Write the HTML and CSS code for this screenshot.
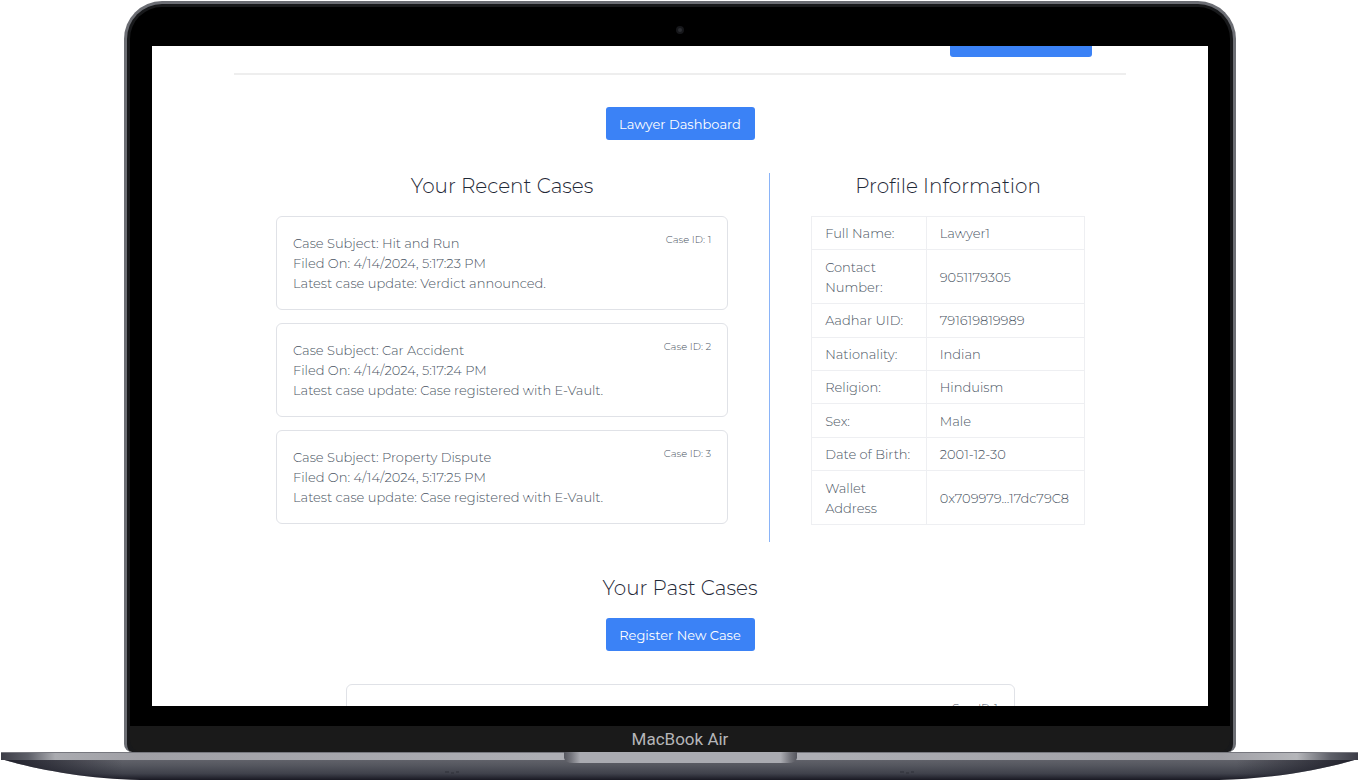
FILE: index.html
```html
<!DOCTYPE html>
<html lang="en">
<head>
<meta charset="utf-8">
<meta name="viewport" content="width=device-width, initial-scale=1">
<title>Lawyer Dashboard</title>
<link rel="stylesheet" href="styles.css">
</head>
<body>
<div class="laptop">
  <div class="lid">
    <div class="bezel">
      <span class="camera"></span>
      <main class="screen">
        <header class="topbar"><button class="btn btn-account" type="button" aria-label="Account"></button></header>
        <div class="hero"><button class="btn" type="button">Lawyer Dashboard</button></div>
        <div class="columns">
          <section class="recent">
            <h2 class="heading">Your Recent Cases</h2>
            <div class="cases">
              <article class="card">
                <div class="details"><p>Case Subject: Hit and Run</p><p>Filed On: 4/14/2024, 5:17:23 PM</p><p>Latest case update: Verdict announced.</p></div>
                <span class="case-id">Case ID: 1</span>
              </article>
              <article class="card">
                <div class="details"><p>Case Subject: Car Accident</p><p>Filed On: 4/14/2024, 5:17:24 PM</p><p>Latest case update: Case registered with E-Vault.</p></div>
                <span class="case-id">Case ID: 2</span>
              </article>
              <article class="card">
                <div class="details"><p>Case Subject: Property Dispute</p><p>Filed On: 4/14/2024, 5:17:25 PM</p><p>Latest case update: Case registered with E-Vault.</p></div>
                <span class="case-id">Case ID: 3</span>
              </article>
            </div>
          </section>
          <section class="profile">
            <h2 class="heading">Profile Information</h2>
            <table class="info">
              <tbody>
                <tr><th scope="row">Full Name:</th><td>Lawyer1</td></tr>
                <tr><th scope="row">Contact<br>Number:</th><td>9051179305</td></tr>
                <tr><th scope="row">Aadhar UID:</th><td>791619819989</td></tr>
                <tr><th scope="row">Nationality:</th><td>Indian</td></tr>
                <tr><th scope="row">Religion:</th><td>Hinduism</td></tr>
                <tr><th scope="row">Sex:</th><td>Male</td></tr>
                <tr><th scope="row">Date of Birth:</th><td>2001-12-30</td></tr>
                <tr><th scope="row">Wallet<br>Address</th><td>0x709979...17dc79C8</td></tr>
              </tbody>
            </table>
          </section>
        </div>
        <section class="past">
          <h2 class="heading">Your Past Cases</h2>
          <button class="btn" type="button">Register New Case</button>
          <article class="card card-past"><span class="case-id">Case ID: 1</span></article>
        </section>
      </main>
    </div>
    <div class="chin">MacBook Air</div>
  </div>
  <div class="base">
    <svg class="deck" viewBox="0 0 1359 29" preserveAspectRatio="none" aria-hidden="true">
      <defs>
        <linearGradient id="under" x1="0" y1="0" x2="0" y2="1">
          <stop offset="0" stop-color="#62636b"/><stop offset=".3" stop-color="#55575f"/><stop offset=".7" stop-color="#3f414b"/><stop offset="1" stop-color="#191923"/>
        </linearGradient>
        <linearGradient id="edge">
          <stop offset="0" stop-color="#3c3d47"/><stop offset=".02" stop-color="#5d5f68"/><stop offset=".04" stop-color="#aaabb0"/><stop offset=".1" stop-color="#a0a0a6"/><stop offset=".4" stop-color="#adaeb4"/><stop offset=".6" stop-color="#adaeb4"/><stop offset=".9" stop-color="#a0a0a6"/><stop offset=".955" stop-color="#b5b6ba"/><stop offset=".98" stop-color="#5d5f68"/><stop offset="1" stop-color="#3c3d47"/>
        </linearGradient>
        <linearGradient id="shade">
          <stop offset="0" stop-color="#14141f" stop-opacity=".85"/><stop offset=".09" stop-color="#14141f" stop-opacity="0"/><stop offset=".91" stop-color="#14141f" stop-opacity="0"/><stop offset="1" stop-color="#14141f" stop-opacity=".85"/>
        </linearGradient>
        <linearGradient id="notch">
          <stop offset="0" stop-color="#55565e"/><stop offset=".03" stop-color="#74757c"/><stop offset=".07" stop-color="#aaabb1"/><stop offset=".93" stop-color="#aaabb1"/><stop offset=".97" stop-color="#74757c"/><stop offset="1" stop-color="#55565e"/>
        </linearGradient>
      </defs>
      <path d="M1 7C35 17 85 27 140 28H1219C1274 27 1324 17 1358 7Z" fill="url(#under)"/>
      <path d="M1 7C35 17 85 27 140 28H1219C1274 27 1324 17 1358 7Z" fill="url(#shade)"/>
      <path d="M1 0H1358V8H1Z" fill="url(#edge)"/>
      <path d="M1 0H1358V1H1Z" fill="#77787f"/>
      <path d="M564 0H797V6Q796 11 788 11H573Q565 11 564 6Z" fill="url(#notch)"/>
      <path d="M445 20h4m2 1h3m2-1h3M900 20h4m2 1h3m2-1h3" fill="none" stroke="#2e3038"/>
    </svg>
  </div>
</div>
</body>
</html>
```
FILE: styles.css
```css
* { box-sizing: border-box; }

body {
  margin: 0;
  background: #fff;
  color: #4b5563;
  font: 300 13px/20px Montserrat, Inter, "Open Sans", sans-serif;
}

p, h2 { margin: 0; }

.laptop {
  display: flex;
  flex-direction: column;
  height: 100vh;
}

.lid {
  flex: 1;
  min-height: 0;
  display: flex;
  flex-direction: column;
  margin: 1px 123px 0 124px;
  padding: 3px 3px 0;
  border: 3px solid #6c6e74;
  border-bottom: 0;
  border-radius: 38px 38px 8px 8px;
  background: #18191b;
  overflow: hidden;
}

.bezel {
  position: relative;
  flex: 1;
  min-height: 0;
  padding: 39px 22px 20px;
  border-radius: 32px 32px 0 0;
  background: #000;
}

.camera {
  position: absolute;
  top: 19px;
  left: 50%;
  width: 8px;
  height: 8px;
  margin-left: -4px;
  border: 2px solid #16171a;
  border-radius: 50%;
  background: #2b2d31;
}

.screen {
  height: 100%;
  padding: 0 82px;
  background: #fff;
  overflow: hidden;
}

.chin {
  height: 26px;
  border-radius: 0 0 12px 12px;
  background: #1a1a1a;
  color: #b5b5b8;
  font: 400 17px/26px Roboto, sans-serif;
  text-align: center;
}

.base { height: 29px; }

.deck {
  display: block;
  width: 100%;
  height: 100%;
}

.btn {
  height: 33px;
  padding: 0 13px;
  border: 0;
  border-radius: 3px;
  background: #3b82f6;
  color: #fff;
  font: inherit;
  font-weight: 400;
}

.topbar {
  display: flex;
  justify-content: flex-end;
  margin-top: -22px;
  padding: 0 34px 16px;
  border-bottom: 2px solid #eee;
}

.btn-account { width: 142px; }

.hero {
  display: flex;
  justify-content: center;
  padding: 32px 0 33px;
}

.hero .btn, .past .btn { min-width: 149px; }

.columns {
  display: grid;
  grid-template-columns: 3fr 2fr;
}

.recent { padding: 0 41px 18px 42px; }

.profile {
  padding: 0 41px;
  border-left: 1px solid #8ab4f8;
}

.heading {
  margin-bottom: 16px;
  color: #1f2937;
  font-size: 20px;
  font-weight: 300;
  line-height: 27px;
  text-align: center;
}

.cases {
  display: grid;
  gap: 13px;
}

.card {
  display: flex;
  justify-content: space-between;
  padding: 16px;
  border: 1px solid #e0e2e7;
  border-radius: 6px;
}

.case-id {
  font-size: 10px;
  line-height: 13px;
}

.info {
  width: 100%;
  height: 309px;
  border-collapse: collapse;
}

.info th, .info td {
  padding: 6px 13px;
  border: 1px solid #eeeff2;
  font-weight: 300;
  text-align: left;
}

.info th { width: 42%; }

.past {
  display: flex;
  flex-direction: column;
  align-items: center;
  padding-top: 33px;
}

.card-past {
  justify-content: flex-end;
  width: 75%;
  min-height: 94px;
  margin-top: 33px;
}
```
